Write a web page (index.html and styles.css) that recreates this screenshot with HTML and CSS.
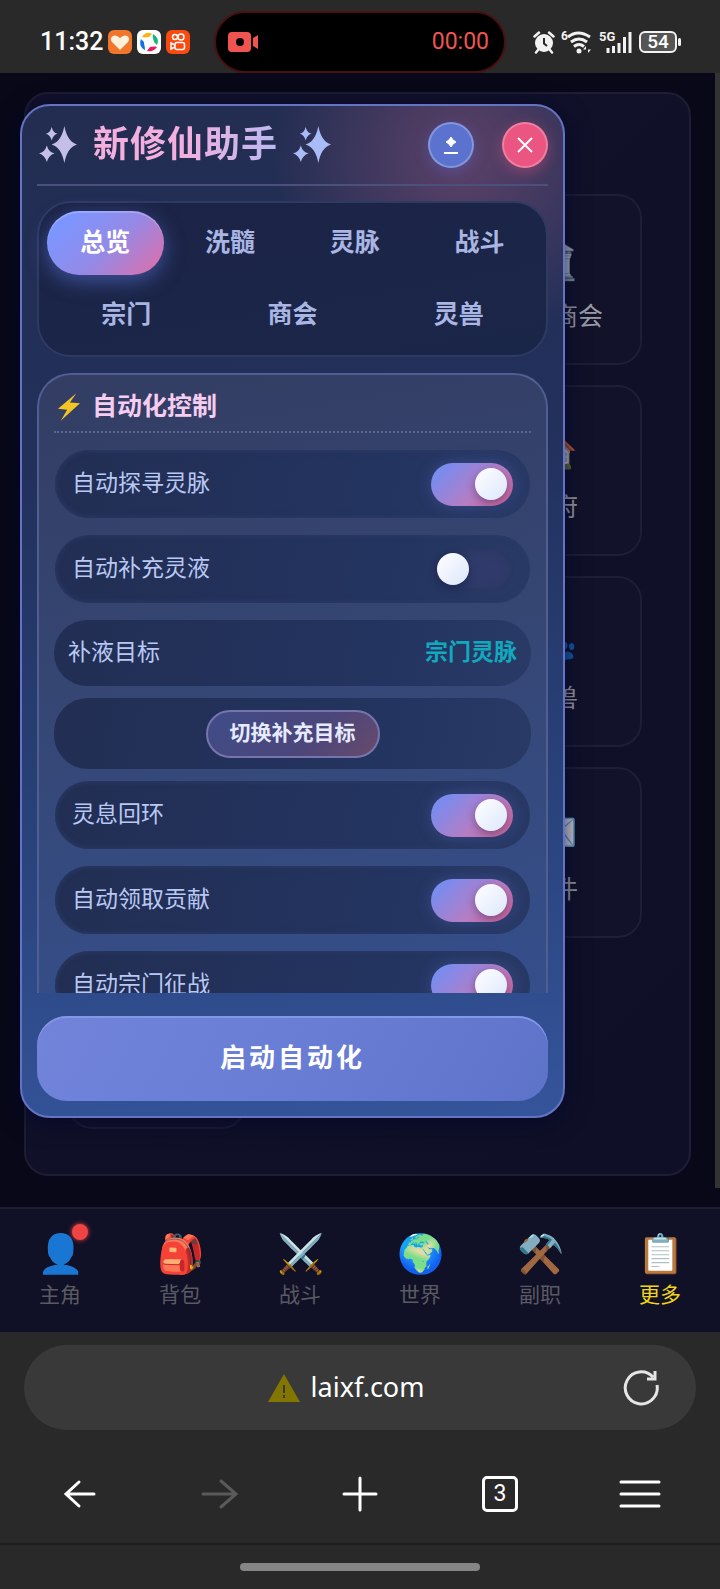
FILE: index.html
```
<!DOCTYPE html>
<html lang="zh-CN">
	<head>
		<meta charset="utf-8">
		<meta name="viewport" content="width=device-width, initial-scale=1">
		<title>新修仙助手</title>
		<link rel="stylesheet" href="styles.css">
	</head>
	<body>
		<header class="status">
			<div class="status-left">
				<span class="clock">11:32</span>
				<svg class="app" viewBox="0 0 24 24"><rect width="24" height="24" rx="6" fill="#f0762c"/><path d="M12 20 4 12C1 8 5 4 9 6l3 2 3-2c4-2 8 2 5 6z" fill="#fff0dc"/></svg>
				<svg class="app" viewBox="0 0 24 24"><rect width="24" height="24" rx="6" fill="#fff"/><path d="M5 7c3-5 7-5 10-3l-3 3c-2 0-4 1-7 0z" fill="#f6b417"/><path d="M16 4c5 3 6 7 4 11l-3-3c0-2-2-4-1-8z" fill="#16b877"/><path d="M20 17c-3 4-6 5-10 4l3-4c2 0 4-1 7 0z" fill="#ee1858"/><path d="M8 20c-4-2-6-6-4-11l3 3c0 3 1 4 1 8z" fill="#176fe8"/></svg>
				<svg class="app" viewBox="0 0 24 24"><rect width="24" height="24" rx="6" fill="#fb4a10"/><g fill="none" stroke="#fff" stroke-width="1.500"><circle cx="9" cy="7" r="2.500"/><circle cx="15" cy="7" r="3"/><rect x="9" y="12.500" width="9.500" height="7" rx="2"/><path d="m9 15-4-2v6l4-2"/></g></svg>
			</div>
			<div class="recorder">
				<svg width="30" height="20" viewBox="0 0 30 20"><rect width="23" height="20" rx="4" fill="#f05450"/><circle cx="12" cy="10" r="4" fill="#000"/><path d="m25 6 5-3v14l-5-3z" fill="#f05450"/></svg>
				<span>00:00</span>
			</div>
			<div class="status-right">
				<svg width="22" height="24" viewBox="0 0 22 24"><circle cx="11" cy="13" r="9" fill="#f2f2f2"/><path d="M1.500 6.500 6 2.500M20.500 6.500 16 2.500M5 20l-2 2.500M17 20l2 2.500" stroke="#f2f2f2" stroke-width="2.500" stroke-linecap="round"/><path d="M11 8v5.500l3 2.500" fill="none" stroke="#292929" stroke-width="2"/></svg>
				<svg width="32" height="26" viewBox="0 0 32 26"><text x="0" y="11" font-size="12" font-weight="700" fill="#f2f2f2">6</text><g fill="none" stroke="#f2f2f2" stroke-width="3"><path d="M7 8q10-8 22 0M10 13q8-6 16 0M13 17.500q5-4 10 0"/></g><circle cx="18" cy="22" r="2.500" fill="#f2f2f2"/><path d="m25 17-3 3.500h3zM27 24l3-3.500h-3z" fill="#f2f2f2"/></svg>
				<svg width="34" height="26" viewBox="0 0 34 26"><text x="0" y="12" font-size="13" font-weight="700" fill="#f2f2f2">5G</text><path d="M9 24v-5M14.500 24v-7M20 24V14M25.500 24V8M31 24V3" stroke="#f2f2f2" stroke-width="3"/></svg>
				<span class="battery">54</span>
			</div>
		</header>

		<main class="game">
			<div class="board">
				<a class="tile" href="#trade"><span class="tile-icon">🏛️</span>仙缘商会</a>
				<a class="tile" href="#home"><span class="tile-icon">🏠</span>洞府</a>
				<a class="tile" href="#pets"><span class="tile-icon">🐾</span>灵兽</a>
				<a class="tile" href="#mail"><span class="tile-icon">✉️</span>邮件</a>
				<a class="tile tile-first" href="#settings"></a>
			</div>
			<div class="scrollbar"></div>

			<section class="helper">
				<div class="helper-head">
					<h1>
						<svg class="sparkle" viewBox="0 0 40 40" fill="#c3bfe8"><path d="M26 1q3 16 13 19-10 3-13 19-3-16-13-19 10-3 13-19zM13 2q1.500 6 6 7-4.500 1-6 7-1.500-6-6-7 4.500-1 6-7zM8 21q2 7 8 8-6 2-8 9-2-7-8-9 6-1 8-8z"/></svg>
						<span>新修仙助手</span>
						<svg class="sparkle" viewBox="0 0 40 40" fill="#a9bcf8"><path d="M26 1q3 16 13 19-10 3-13 19-3-16-13-19 10-3 13-19zM13 2q1.500 6 6 7-4.500 1-6 7-1.500-6-6-7 4.500-1 6-7zM8 21q2 7 8 8-6 2-8 9-2-7-8-9 6-1 8-8z"/></svg>
					</h1>
					<button class="round" aria-label="收起"><svg width="14" height="20" viewBox="0 0 14 20"><path d="m7 2 2 3 3 2-3 2-2 3-2-3-3-2 3-2z" fill="#fff" stroke="#fff"/><path d="M0 18h14" stroke="#fff" stroke-width="2"/></svg></button>
					<button class="round close" aria-label="关闭"><svg width="16" height="16" viewBox="0 0 16 16"><path d="m1 1 14 14M15 1 1 15" stroke="#fff" stroke-width="2"/></svg></button>
				</div>

				<nav class="tabs">
					<button class="tab active">总览</button>
					<button class="tab">洗髓</button>
					<button class="tab">灵脉</button>
					<button class="tab">战斗</button>
					<button class="tab">宗门</button>
					<button class="tab">商会</button>
					<button class="tab">灵兽</button>
				</nav>

				<div class="panel">
					<h2><svg width="22" height="28" viewBox="0 0 24 30"><path d="M20 0 0 17l10 1-7 12L24 11l-11-1z" fill="#f3c426"/></svg>自动化控制</h2>
					<label class="row">自动探寻灵脉<input type="checkbox" class="switch" checked></label>
					<label class="row">自动补充灵液<input type="checkbox" class="switch"></label>
					<div class="info">补液目标<strong>宗门灵脉</strong></div>
					<div class="action"><button class="swap">切换补充目标</button></div>
					<label class="row">灵息回环<input type="checkbox" class="switch" checked></label>
					<label class="row">自动领取贡献<input type="checkbox" class="switch" checked></label>
					<label class="row">自动宗门征战<input type="checkbox" class="switch" checked></label>
				</div>

				<button class="start">启动自动化</button>
			</section>
		</main>

		<nav class="dock">
			<a href="#role"><span class="dock-icon">👤<i class="dot"></i></span>主角</a>
			<a href="#bag"><span class="dock-icon">🎒</span>背包</a>
			<a href="#fight"><span class="dock-icon">⚔️</span>战斗</a>
			<a href="#world"><span class="dock-icon">🌍</span>世界</a>
			<a href="#craft"><span class="dock-icon">⚒️</span>副职</a>
			<a href="#more" class="current"><span class="dock-icon">📋</span>更多</a>
		</nav>

		<footer class="browser">
			<div class="address">
				<svg width="32" height="28" viewBox="0 0 32 28"><path d="M16 0 32 28H0z" fill="#827600"/><path d="M16 11v8M16 21v3" stroke="#393939" stroke-width="2"/></svg>
				<span>laixf.com</span>
				<button class="reload" aria-label="刷新"><svg width="36" height="36" viewBox="0 0 36 36" fill="none" stroke="#e6e6e6" stroke-width="3"><path d="M34 15a16 16 0 1 1-4-8M32 1v8h-8"/></svg></button>
			</div>
			<div class="keys">
				<button aria-label="后退"><svg width="30" height="26" viewBox="0 0 30 26"><path d="M29 13H2M14 1 1 13l13 12"/></svg></button>
				<button aria-label="前进" disabled><svg width="34" height="28" viewBox="0 0 34 28"><path d="M0 14h33M18 1l15 13-15 13"/></svg></button>
				<button aria-label="新建"><svg width="32" height="32" viewBox="0 0 32 32"><path d="M16 0v32M0 16h32"/></svg></button>
				<button aria-label="标签页"><span class="count">3</span></button>
				<button aria-label="菜单"><svg width="38" height="26" viewBox="0 0 38 26"><path d="M0 1h38M0 13h38M0 25h38"/></svg></button>
			</div>
			<div class="gesture"><span></span></div>
		</footer>
	</body>
</html>
```
FILE: styles.css
```
* {
	box-sizing: border-box;
}
body {
	margin: 0;
	min-height: 100vh;
	display: flex;
	flex-direction: column;
	background: #292929;
	color: #fff;
	font-family: Roboto, "Noto Sans CJK SC", sans-serif;
	line-height: 1.2;
}
button {
	font: inherit;
	color: inherit;
	border: 0;
	padding: 0;
	background: none;
}
a {
	color: inherit;
	text-decoration: none;
}
svg {
	display: block;
	flex: none;
}

/* phone status bar */
.status {
	display: grid;
	grid-template-columns: 1fr 292px 1fr;
	height: 73px;
	padding-top: 11px;
}
.status-left, .status-right {
	display: flex;
	align-items: center;
	gap: 5px;
	padding-left: 40px;
}
.status-right {
	justify-content: flex-end;
	gap: 6px;
	padding: 0 43px 0 0;
}
.clock {
	font-size: 25px;
	font-weight: 500;
}
.app {
	width: 24px;
	height: 24px;
}
.recorder {
	display: flex;
	align-items: center;
	justify-content: space-between;
	padding: 0 15px 0 12px;
	border: 2px solid #4b1010;
	border-radius: 31px;
	background: #000;
	color: #f05450;
	font-size: 23px;
}
.battery {
	position: relative;
	width: 38px;
	height: 22px;
	border: 2px solid #f2f2f2;
	border-radius: 6px;
	background: #555;
	font-size: 19px;
	font-weight: 500;
	line-height: 18px;
	text-align: center;
}
.battery::after {
	content: "";
	position: absolute;
	right: -6px;
	top: 5px;
	width: 3px;
	height: 8px;
	border-radius: 2px;
	background: #f2f2f2;
}

/* game page behind the helper */
.game {
	position: relative;
	flex: 1;
	padding: 19px 29px 31px 24px;
	background: #080818;
}
.board {
	display: grid;
	grid-template-columns: repeat(3, 1fr);
	grid-auto-rows: 171px;
	gap: 20px;
	padding: 100px 47px 45px 42px;
	border: 2px solid #1e1d35;
	border-radius: 24px;
	background: linear-gradient(135deg, #12112a, #0f0f27);
}
.tile {
	grid-column: 3;
	display: flex;
	flex-direction: column;
	align-items: center;
	padding-top: 38px;
	border: 2px solid #1f1e35;
	border-radius: 24px;
	background: #12122a;
	color: #9c9ca6;
	font-size: 25px;
	line-height: 34px;
}
.tile-first {
	grid-column: 1;
}
.tile-icon {
	height: 66px;
	font-size: 40px;
	line-height: 52px;
	opacity: .8;
}
.scrollbar {
	position: absolute;
	top: 0;
	right: 0;
	bottom: 19px;
	width: 5px;
	background: #333;
}

.helper {
	position: absolute;
	top: 31px;
	left: 20px;
	right: 155px;
	padding: 15px;
	border: 2px solid #6573c4;
	border-radius: 30px;
	background:
		radial-gradient(circle at 440px 50px, rgba(150, 85, 125, .5), transparent 190px),
		linear-gradient(175deg, #232d51, #22305c 35%, #2a4580 75%, #35549b);
	box-shadow: 0 4px 24px rgba(4, 8, 40, .8);
}
.helper-head {
	display: flex;
	align-items: center;
	gap: 28px;
	height: 65px;
	padding-bottom: 16px;
	border-bottom: 2px solid #4b507d;
	margin-bottom: 15px;
}
h1 {
	flex: 1;
	display: flex;
	align-items: center;
	gap: 15px;
	margin: 0;
	padding-left: 2px;
	font-size: 36px;
	line-height: 44px;
	letter-spacing: 1px;
	white-space: nowrap;
}
h1 span {
	background: linear-gradient(100deg, #f3b0de 50%, #b7b9f2);
	background-clip: text;
	-webkit-background-clip: text;
	color: transparent;
}
.sparkle {
	width: 39px;
	height: 39px;
}
.round {
	display: grid;
	place-items: center;
	flex: none;
	width: 46px;
	height: 46px;
	border: 2px solid rgba(255, 255, 255, .25);
	border-radius: 50%;
	background: #5b73cf;
	box-shadow: 0 4px 14px rgba(80, 100, 210, .4);
}
.close {
	background: #ea5582;
	box-shadow: 0 4px 14px rgba(234, 85, 130, .4);
}

.tabs {
	display: flex;
	flex-wrap: wrap;
	gap: 8px;
	padding: 8px;
	margin-bottom: 16px;
	border: 2px solid #2f3a62;
	border-radius: 34px;
	background: linear-gradient(170deg, #1c2446, #1a2648);
}
.tab {
	flex: 1 0 22%;
	height: 64px;
	border-radius: 32px;
	color: #a9b5e2;
	font-size: 25px;
	font-weight: 700;
}
.tab.active {
	background: linear-gradient(135deg, #7c96ff 15%, #9589e6 55%, #e46da4);
	box-shadow: 0 6px 20px rgba(95, 125, 240, .5), inset 0 2px 0 rgba(255, 255, 255, .2);
	color: #fff;
}

.panel {
	height: 620px;
	padding: 16px 15px 0;
	border: 2px solid #505e92;
	border-bottom: 0;
	border-radius: 34px 34px 0 0;
	background: linear-gradient(170deg, #333d63, #354673 45%, #354f8c);
	overflow-y: auto;
	scrollbar-width: none;
}
h2 {
	display: flex;
	align-items: center;
	gap: 12px;
	height: 42px;
	margin: 0 0 17px;
	padding: 0 0 8px 4px;
	border-bottom: 2px dotted #5b678f;
	color: #f6cdf0;
	font-size: 25px;
}
.row, .info, .action {
	display: flex;
	align-items: center;
	justify-content: space-between;
	border-radius: 34px;
	background: linear-gradient(100deg, #222e53, #233460 70%, #293a66);
	color: #b9c8f3;
	font-size: 23px;
}
.row {
	height: 68px;
	margin: 0 1px 17px;
	padding: 0 17px;
	box-shadow: inset 0 0 5px 1px #2b3a66;
}
.info {
	height: 66px;
	margin-bottom: 12px;
	padding: 0 14px;
}
.info strong {
	color: #12a9bf;
}
.action {
	justify-content: center;
	height: 71px;
	margin-bottom: 12px;
}
.swap {
	height: 48px;
	padding: 0 22px;
	border: 2px solid #7774ad;
	border-radius: 24px;
	background: linear-gradient(135deg, #3f4c88, #4b467a 60%, #674a6c);
	color: #e6eaff;
	font-size: 21px;
	font-weight: 700;
}
.switch {
	appearance: none;
	display: flex;
	align-items: center;
	width: 82px;
	height: 43px;
	margin: 0;
	padding: 0 6px;
	border-radius: 22px;
	background: linear-gradient(90deg, transparent 30%, #303b6b 50%);
	box-shadow: inset 0 0 8px 2px #28355e;
}
.switch::before {
	content: "";
	width: 32px;
	height: 32px;
	border-radius: 50%;
	background: linear-gradient(135deg, #fff, #dce6fc);
	box-shadow: 0 3px 8px rgba(20, 20, 60, .4);
}
.switch:checked {
	justify-content: flex-end;
	background: linear-gradient(135deg, #7b8bee 15%, #b57dc4 60%, #cf6391);
	box-shadow: 0 0 16px rgba(100, 120, 220, .3);
}
.start {
	display: block;
	width: 100%;
	height: 85px;
	margin-top: 23px;
	border-radius: 30px;
	background: linear-gradient(120deg, #7184da, #6a7dd5 50%, #5d73c8);
	box-shadow: inset 0 2px 0 #8597e2;
	font-size: 26px;
	font-weight: 700;
	letter-spacing: 3px;
}

/* game navigation */
.dock {
	display: flex;
	height: 125px;
	padding-top: 20px;
	border-top: 2px solid #1d1d33;
	background: #101026;
}
.dock a {
	flex: 1;
	display: flex;
	flex-direction: column;
	align-items: center;
	color: #5a5a63;
	font-size: 21px;
	line-height: 32px;
}
.dock .current {
	color: #f0d51c;
}
.dock-icon {
	position: relative;
	height: 50px;
	color: #fff;
	font-size: 38px;
	line-height: 50px;
}
.dot {
	position: absolute;
	top: -5px;
	right: -4px;
	width: 16px;
	height: 16px;
	border-radius: 50%;
	background: #ef4444;
	box-shadow: 0 0 5px #ef4444;
}

/* browser toolbar */
.browser {
	padding-top: 13px;
}
.address {
	position: relative;
	display: flex;
	align-items: center;
	justify-content: center;
	gap: 11px;
	height: 85px;
	margin: 0 24px;
	padding-right: 28px;
	border-radius: 43px;
	background: #393939;
	font-family: "Noto Sans", sans-serif;
	font-size: 27px;
}
.reload {
	position: absolute;
	right: 37px;
}
.keys {
	display: flex;
	height: 115px;
	padding: 15px 10px 0;
	border-bottom: 2px solid #1e1e1e;
}
.keys button {
	flex: 1;
	display: grid;
	place-items: center;
}
.keys svg {
	overflow: visible;
	fill: none;
	stroke: #fff;
	stroke-width: 3;
	stroke-linecap: round;
}
.keys button:disabled svg {
	stroke: #5a5a5a;
}
.count {
	width: 36px;
	height: 36px;
	border: 3px solid #fff;
	border-radius: 5px;
	font-size: 23px;
	line-height: 30px;
}
.gesture {
	display: grid;
	place-items: center;
	height: 44px;
}
.gesture span {
	width: 240px;
	height: 8px;
	border-radius: 4px;
	background: #858585;
}
```
